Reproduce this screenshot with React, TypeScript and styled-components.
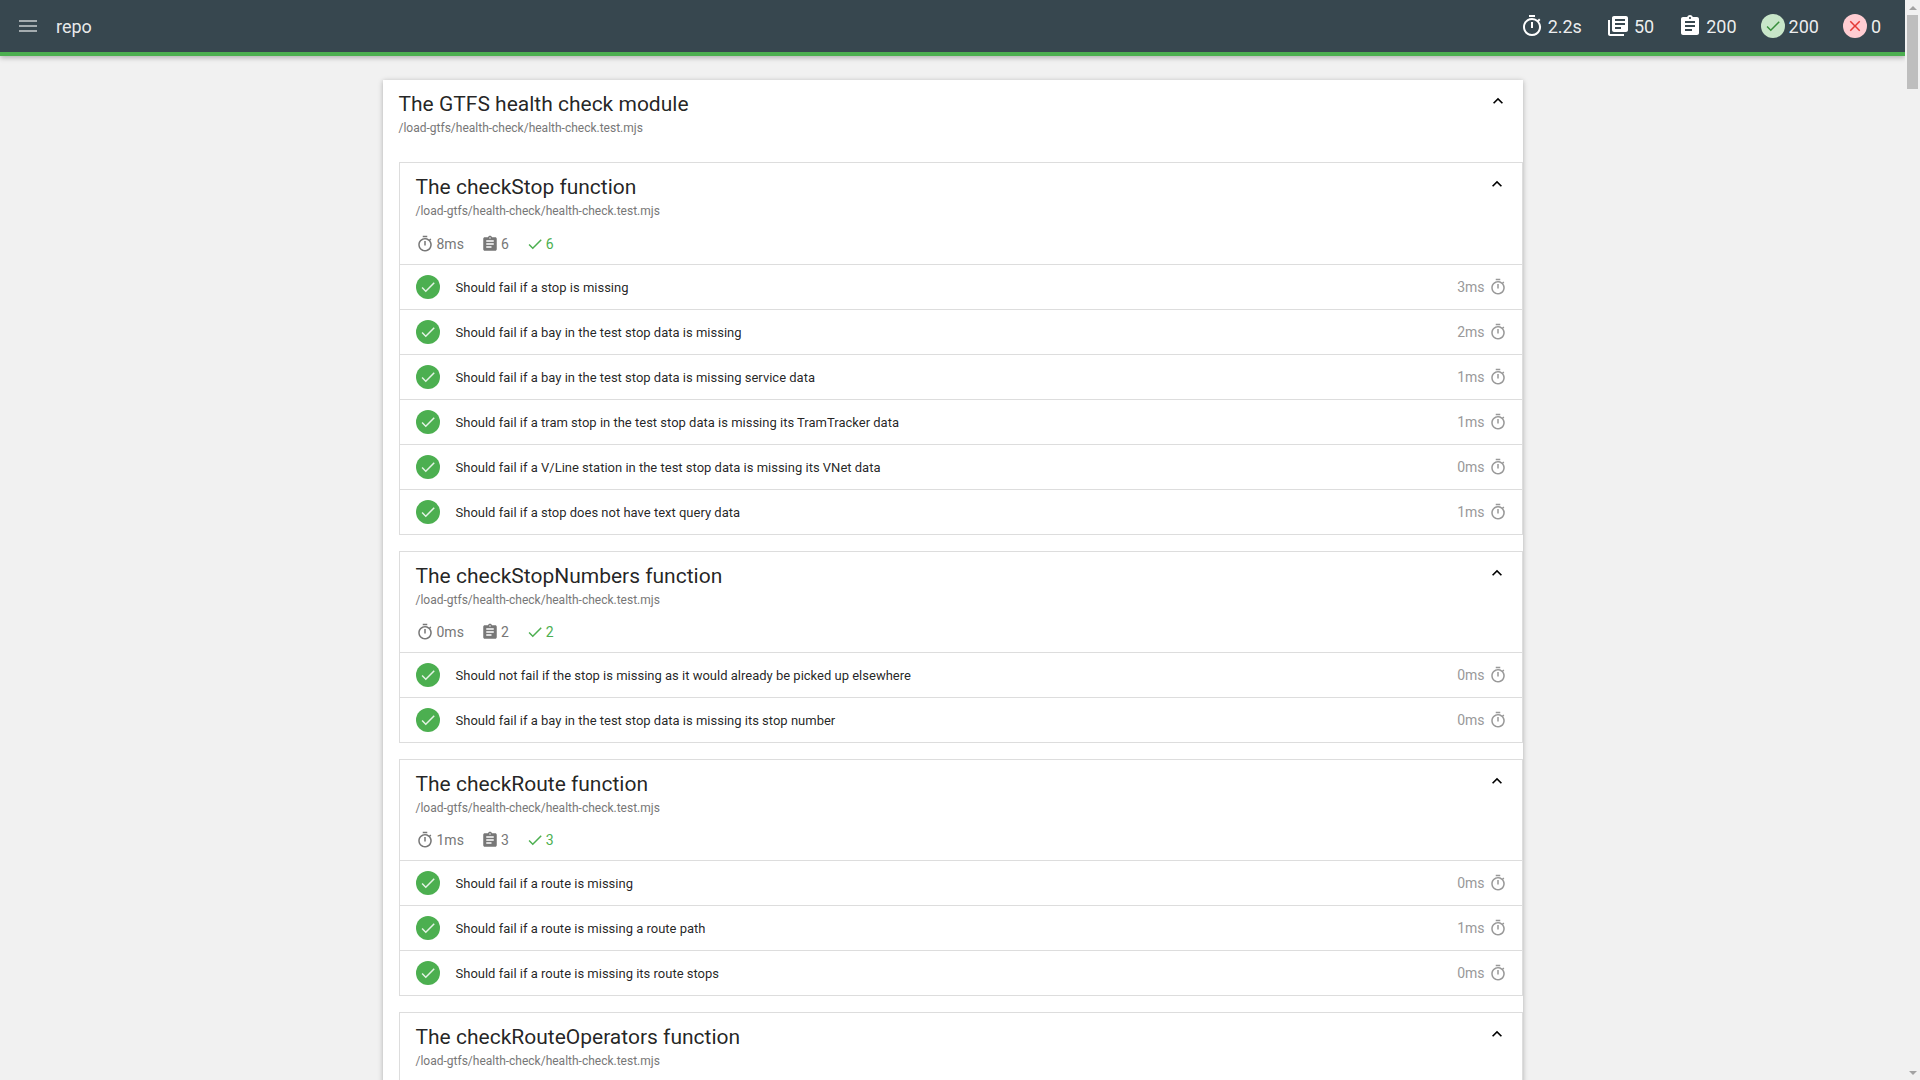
import React from "react";
import styled, { createGlobalStyle } from "styled-components";
import { MdOutlineTimer, MdLibraryBooks, MdAssignment, MdCheck, MdClose, MdMenu, MdExpandLess } from "react-icons/md";

const Global = createGlobalStyle`
  html, body { height: 100%; }
  body { margin: 0; background: #f1f1f1; font-family: Roboto, "Liberation Sans", sans-serif; color: #000; overflow: hidden; }
`;

const Window = styled.div`
  display: grid;
  grid-template-columns: 1fr 15px;
  height: 100vh;
  overflow: hidden;
`;

const Content = styled.div`
  min-width: 0;
  height: 100vh;
  overflow: hidden;
`;

const ScrollRail = styled.div`
  display: flex;
  flex-direction: column;
  align-items: center;
  background: #f1f1f1;
`;

const ArrowBox = styled.div`
  flex: none;
  width: 15px;
  height: 15px;
  display: flex;
  align-items: center;
  justify-content: center;
`;

const UpArrow = styled.span`
  width: 0;
  height: 0;
  border-left: 4px solid transparent;
  border-right: 4px solid transparent;
  border-bottom: 4px solid #a3a3a3;
`;

const DownArrow = styled(UpArrow)`
  border-bottom: 0;
  border-top: 4px solid #a3a3a3;
`;

const ScrollTrack = styled.div`
  flex: 1;
  width: 100%;
  display: flex;
  justify-content: center;
`;

const ScrollThumb = styled.div`
  width: 11px;
  height: 74px;
  background: #bebebe;
`;

const TopBar = styled.header`
  position: relative;
  z-index: 10;
  height: 56px;
  box-sizing: border-box;
  background: #37474f;
  border-bottom: 4px solid #4caf50;
  box-shadow: 0 2px 5px rgba(0, 0, 0, 0.26);
  display: flex;
  align-items: center;
  padding: 0 24px 0 16px;
  color: #fff;
`;

const MenuIcon = styled(MdMenu)`
  font-size: 24px;
  color: rgba(255, 255, 255, 0.55);
`;

const RepoName = styled.span`
  margin-left: 16px;
  font-size: 18px;
  color: rgba(255, 255, 255, 0.9);
`;

const TopStats = styled.div`
  margin-left: auto;
  display: flex;
  align-items: center;
  gap: 24px;
`;

const TopStat = styled.div`
  display: flex;
  align-items: center;
  gap: 4px;
  font-size: 18px;
  color: rgba(255, 255, 255, 0.92);
  svg { font-size: 24px; color: #fff; }
`;

const Badge = styled.span<{ $bg: string; $fg: string }>`
  width: 24px;
  height: 24px;
  border-radius: 50%;
  display: flex;
  align-items: center;
  justify-content: center;
  background: ${(p) => p.$bg};
  svg { font-size: 18px; color: ${(p) => p.$fg}; }
`;

const Main = styled.main`
  width: 1140px;
  margin: 24px auto 0;
`;

const Card = styled.section`
  background: #fff;
  box-shadow: 0 1px 5px rgba(0, 0, 0, 0.28);
  padding: 0 0 16px 16px;
`;

const Head = styled.div<{ $inner?: boolean }>`
  position: relative;
  padding: ${(p) => (p.$inner ? "10px 16px 0" : "10px 0 10.2px")};
`;

const Title = styled.h3`
  margin: 0;
  font-size: 21px;
  font-weight: 400;
  line-height: 28px;
  color: rgba(0, 0, 0, 0.87);
`;

const FileName = styled.div`
  margin-top: 2px;
  font-size: 12px;
  line-height: 16px;
  color: #777;
`;

const Chevron = styled(MdExpandLess)`
  position: absolute;
  top: 11px;
  right: 15px;
  font-size: 20px;
  color: #000;
`;

const Section = styled.div`
  margin-top: 16px;
  min-height: 102px;
  background: #fff;
  border: 1px solid #ddd;
  box-sizing: border-box;
`;

const Stats = styled.div`
  display: flex;
  align-items: center;
  gap: 17px;
  margin-top: 12.4px;
  height: 24px;
  padding-bottom: 8px;
  box-sizing: content-box;
`;

const Stat = styled.div<{ $green?: boolean; $gap?: number }>`
  display: flex;
  align-items: center;
  gap: ${(p) => p.$gap ?? 2}px;
  font-size: 14px;
  color: ${(p) => (p.$green ? "#4caf50" : "#777")};
  svg { font-size: 18px; }
`;

const Row = styled.div`
  height: 45px;
  box-sizing: border-box;
  border-top: 1px solid #ddd;
  display: flex;
  align-items: center;
  padding: 0 15px 0 16px;
`;

const Pass = styled.span`
  width: 24px;
  height: 24px;
  border-radius: 50%;
  background: #4caf50;
  display: flex;
  align-items: center;
  justify-content: center;
  flex: none;
  svg { font-size: 18px; color: rgba(255, 255, 255, 0.85); }
`;

const RowTitle = styled.span`
  margin: 1.1px 0 0 16px;
  font-size: 13px;
  color: rgba(0, 0, 0, 0.87);
`;

const Duration = styled.span`
  margin-left: auto;
  display: flex;
  align-items: center;
  gap: 4px;
  font-size: 14px;
  color: #999;
  svg { font-size: 18px; }
`;

type Test = [string, string];
type Suite = { title: string; time?: string; tests: Test[] };

const FILE = "/load-gtfs/health-check/health-check.test.mjs";

const suites: Suite[] = [
  {
    title: "The checkStop function",
    time: "8ms",
    tests: [
      ["Should fail if a stop is missing", "3ms"],
      ["Should fail if a bay in the test stop data is missing", "2ms"],
      ["Should fail if a bay in the test stop data is missing service data", "1ms"],
      ["Should fail if a tram stop in the test stop data is missing its TramTracker data", "1ms"],
      ["Should fail if a V/Line station in the test stop data is missing its VNet data", "0ms"],
      ["Should fail if a stop does not have text query data", "1ms"],
    ],
  },
  {
    title: "The checkStopNumbers function",
    time: "0ms",
    tests: [
      ["Should not fail if the stop is missing as it would already be picked up elsewhere", "0ms"],
      ["Should fail if a bay in the test stop data is missing its stop number", "0ms"],
    ],
  },
  {
    title: "The checkRoute function",
    time: "1ms",
    tests: [
      ["Should fail if a route is missing", "0ms"],
      ["Should fail if a route is missing a route path", "1ms"],
      ["Should fail if a route is missing its route stops", "0ms"],
    ],
  },
  { title: "The checkRouteOperators function", tests: [] },
];

export default function App() {
  return (
    <Window>
      <Global />
      <Content>
        <TopBar>
          <MenuIcon />
          <RepoName>repo</RepoName>
          <TopStats>
            <TopStat><MdOutlineTimer /> 2.2s</TopStat>
            <TopStat><MdLibraryBooks /> 50</TopStat>
            <TopStat><MdAssignment /> 200</TopStat>
            <TopStat><Badge $bg="#c8e6c9" $fg="#388e3c"><MdCheck /></Badge> 200</TopStat>
            <TopStat><Badge $bg="#ffcdd2" $fg="#e53935"><MdClose /></Badge> 0</TopStat>
          </TopStats>
        </TopBar>
        <Main>
          <Card>
            <Head>
              <Title>The GTFS health check module</Title>
              <FileName>{FILE}</FileName>
              <Chevron />
            </Head>
            {suites.map((s) => (
              <Section key={s.title}>
                <Head $inner>
                  <Title>{s.title}</Title>
                  <FileName>{FILE}</FileName>
                  {s.time && (
                    <Stats>
                      <Stat $gap={3}><MdOutlineTimer /> {s.time}</Stat>
                      <Stat><MdAssignment /> {s.tests.length}</Stat>
                      <Stat $green><MdCheck /> {s.tests.length}</Stat>
                    </Stats>
                  )}
                  <Chevron />
                </Head>
                {s.tests.map(([t, d]) => (
                  <Row key={t}>
                    <Pass><MdCheck /></Pass>
                    <RowTitle>{t}</RowTitle>
                    <Duration>{d} <MdOutlineTimer /></Duration>
                  </Row>
                ))}
              </Section>
            ))}
          </Card>
        </Main>
      </Content>
      <ScrollRail>
        <ArrowBox><UpArrow /></ArrowBox>
        <ScrollTrack><ScrollThumb /></ScrollTrack>
        <ArrowBox><DownArrow /></ArrowBox>
      </ScrollRail>
    </Window>
  );
}
